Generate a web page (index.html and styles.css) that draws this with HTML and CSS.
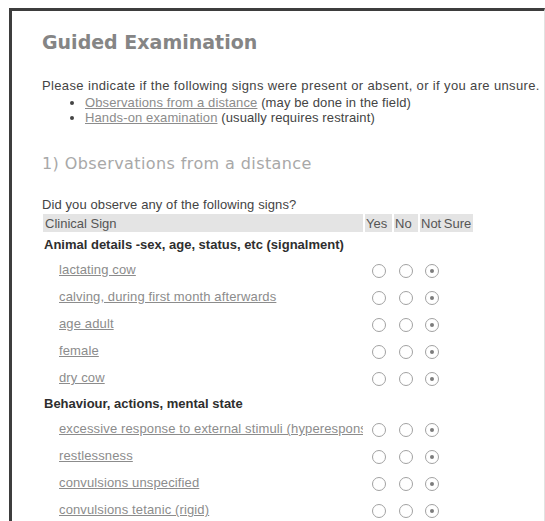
FILE: index.html
```html
<!DOCTYPE html>
<html>
<head>
<meta charset="utf-8">
<title>Guided Examination</title>
<link rel="stylesheet" href="styles.css">
</head>
<body>
<div class="frame">
  <h1 class="title">Guided Examination</h1>
  <p class="intro">Please indicate if the following signs were present or absent, or if you are unsure.</p>
  <ul class="sections">
    <li><a href="#distance">Observations from a distance</a> (may be done in the field)</li>
    <li><a href="#hands-on">Hands-on examination</a> (usually requires restraint)</li>
  </ul>
  <h2 class="section-title" id="distance">1) Observations from a distance</h2>
  <p class="question">Did you observe any of the following signs?</p>
  <table class="signs">
    <thead>
      <tr>
        <th class="col-sign">Clinical Sign</th>
        <th class="col-yes">Yes</th>
        <th class="col-no">No</th>
        <th class="col-unsure">Not Sure</th>
      </tr>
    </thead>
    <tbody>
      <tr class="group"><td colspan="4">Animal details -sex, age, status, etc (signalment)</td></tr>
      <tr class="sign"><td class="name"><a href="#">lactating cow</a></td><td><input type="radio" name="s1"></td><td><input type="radio" name="s1"></td><td><input type="radio" name="s1" checked></td></tr>
      <tr class="sign"><td class="name"><a href="#">calving, during first month afterwards</a></td><td><input type="radio" name="s2"></td><td><input type="radio" name="s2"></td><td><input type="radio" name="s2" checked></td></tr>
      <tr class="sign"><td class="name"><a href="#">age adult</a></td><td><input type="radio" name="s3"></td><td><input type="radio" name="s3"></td><td><input type="radio" name="s3" checked></td></tr>
      <tr class="sign"><td class="name"><a href="#">female</a></td><td><input type="radio" name="s4"></td><td><input type="radio" name="s4"></td><td><input type="radio" name="s4" checked></td></tr>
      <tr class="sign"><td class="name"><a href="#">dry cow</a></td><td><input type="radio" name="s5"></td><td><input type="radio" name="s5"></td><td><input type="radio" name="s5" checked></td></tr>
      <tr class="group"><td colspan="4">Behaviour, actions, mental state</td></tr>
      <tr class="sign"><td class="name"><a href="#">excessive response to external stimuli (hyperesponsiveness)</a></td><td><input type="radio" name="s6"></td><td><input type="radio" name="s6"></td><td><input type="radio" name="s6" checked></td></tr>
      <tr class="sign"><td class="name"><a href="#">restlessness</a></td><td><input type="radio" name="s7"></td><td><input type="radio" name="s7"></td><td><input type="radio" name="s7" checked></td></tr>
      <tr class="sign"><td class="name"><a href="#">convulsions unspecified</a></td><td><input type="radio" name="s8"></td><td><input type="radio" name="s8"></td><td><input type="radio" name="s8" checked></td></tr>
      <tr class="sign"><td class="name"><a href="#">convulsions tetanic (rigid)</a></td><td><input type="radio" name="s9"></td><td><input type="radio" name="s9"></td><td><input type="radio" name="s9" checked></td></tr>
    </tbody>
  </table>
</div>
</body>
</html>
```
FILE: styles.css
```css
html, body {
  margin: 0;
  padding: 0;
  background: #ffffff;
  overflow: hidden;
}

body {
  font-family: "Liberation Sans", Arial, sans-serif;
  font-size: 13px;
  color: #3c3c3c;
}

/* framed panel: heavy rule on top and left, light edge on the right */
.frame {
  margin: 8px 0 0 9px;
  border-top: 3px solid #3d3d3d;
  border-left: 3px solid #3d3d3d;
  border-right: 1px solid #e2e2e2;
  padding: 19px 0 0 30px;
  height: 520px;
  overflow: hidden;
}

.title {
  font-family: "DejaVu Sans", sans-serif;
  font-size: 19px;
  font-weight: bold;
  color: #858585;
  margin: 0 0 24px 0;
  line-height: 24px;
}

.intro {
  margin: 0;
  line-height: 15px;
  color: #444;
  letter-spacing: 0.36px;
  white-space: nowrap;
}

.sections {
  margin: 2px 0 0 0;
  padding-left: 43px;
  line-height: 15px;
  color: #444;
  letter-spacing: 0.12px;
}

.sections a,
.signs a {
  color: #8c8c8c;
  text-decoration: underline;
}

.section-title {
  font-family: "DejaVu Sans", sans-serif;
  font-size: 16px;
  font-weight: normal;
  letter-spacing: 0.4px;
  color: #a8a8a8;
  margin: 29px 0 0 0;
  line-height: 20px;
}

.question {
  margin: 23px 0 0 0;
  line-height: 15px;
  color: #444;
  letter-spacing: 0.1px;
}

.signs {
  table-layout: fixed;
  width: 433px;
  border-collapse: separate;
  border-spacing: 2px 0;
  margin: 2px 0 0 -1px;
}

.signs th {
  background: #e4e4e4;
  font-weight: normal;
  color: #555;
  text-align: left;
  padding: 2px 1px 1px 1px;
  height: 15px;
  line-height: 15px;
  white-space: nowrap;
}

.signs .col-sign { width: 317px; padding-left: 2px; }
.signs .col-yes { width: 25px; }
.signs .col-no { width: 22px; }
.signs .col-unsure { width: 51px; word-spacing: -1px; }

.group td {
  font-weight: bold;
  color: #2e2e2e;
  height: 19px;
  line-height: 15px;
  padding: 5px 0 0 1px;
  vertical-align: top;
  white-space: nowrap;
}

.sign td {
  height: 27px;
  padding: 0;
  vertical-align: middle;
}

.sign .name {
  padding-left: 16px;
  overflow: hidden;
  white-space: nowrap;
}

.name a {
  letter-spacing: 0.13px;
}

.signs input[type="radio"] {
  appearance: none;
  -webkit-appearance: none;
  width: 14px;
  height: 14px;
  margin: 2px 0 0 5px;
  border: 1px solid #a2a2a2;
  border-radius: 50%;
  background: #fff;
  vertical-align: middle;
  box-sizing: border-box;
  position: relative;
}

.sign td:nth-child(2) input[type="radio"] {
  margin-left: 7px;
}

.signs input[type="radio"]:checked::after {
  content: "";
  position: absolute;
  left: 4px;
  top: 4px;
  width: 4px;
  height: 4px;
  border-radius: 50%;
  background: #7c7c7c;
}
```
